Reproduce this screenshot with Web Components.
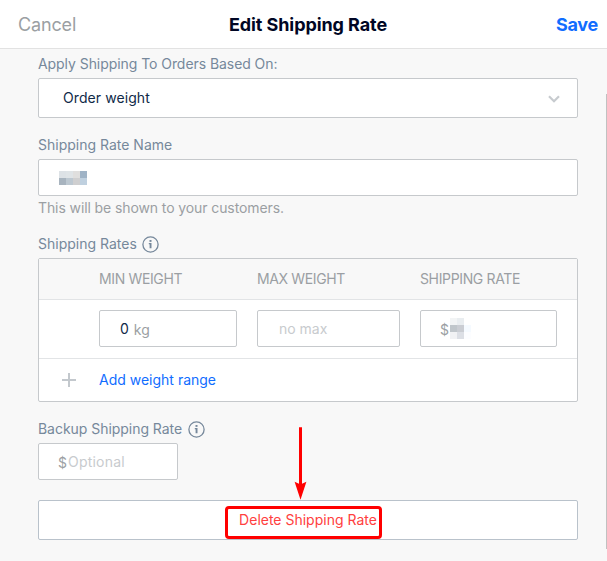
<!DOCTYPE html>
<html lang="en">
<head>
<meta charset="utf-8">
<title>Edit Shipping Rate</title>
<style>
    body {
        margin: 0;
        height: 561px;
        overflow: hidden;
        background: #f8f8f8;
        font-family: Inter, "Liberation Sans", sans-serif;
        font-size: 14px;
        line-height: 20px;
        color: #0f2a48;
    }
</style>
</head>
<body>
<rate-editor>
    <modal-header slot="header">
        <span slot="cancel">Cancel</span>
        Edit Shipping Rate
        <span slot="save">Save</span>
    </modal-header>

    <form-field label="Apply Shipping To Orders Based On:" style="--gap: 1px; --tracking: -0.06px">
        <select-box>Order weight</select-box>
    </form-field>

    <form-field label="Shipping Rate Name" style="--gap: 13px">
        <text-box style="--pad: 20px"><pixel-mask cols="4" colors="#dde2e6 #dfe4e7 #e0dfde #9fb3c6 #a8b4bf #bdc8d1 #cfcfd0 #bfd0df"></pixel-mask></text-box>
        <span slot="hint">This will be shown to your customers.</span>
    </form-field>

    <form-field label="Shipping Rates" info style="--gap: 11px">
        <rate-table></rate-table>
    </form-field>

    <form-field label="Backup Shipping Rate" info style="--gap: 13px; --tracking: -0.04px">
        <text-box prefix="$" placeholder="Optional" style="width: 140px; --pad: 19px; --tracking: 0.22px"></text-box>
    </form-field>

    <delete-button>Delete Shipping Rate</delete-button>
</rate-editor>

<script>
// --- Page shell ---
class RateEditor extends HTMLElement {
    constructor() {
        super();
        this.attachShadow({ mode: 'open' });
    }

    connectedCallback() {
        this.shadowRoot.innerHTML = `
            <style>
                :host {
                    display: block;
                    position: relative;
                    height: 561px;
                }
                main {
                    display: flex;
                    flex-direction: column;
                    padding: 0 29px 0 38px;
                }
                .scrollbar {
                    position: absolute;
                    right: 0;
                    top: 94px;
                    width: 1px;
                    height: 455px;
                    background: #c1c1c1;
                }
            </style>
            <slot name="header"></slot>
            <main><slot></slot></main>
            <div class="scrollbar"></div>
        `;
    }
}
customElements.define('rate-editor', RateEditor);


// --- Header bar ---
class ModalHeader extends HTMLElement {
    constructor() {
        super();
        this.attachShadow({ mode: 'open' });
    }

    connectedCallback() {
        this.shadowRoot.innerHTML = `
            <style>
                :host {
                    display: grid;
                    grid-template-columns: 1fr auto 1fr;
                    align-items: center;
                    box-sizing: border-box;
                    height: 49px;
                    padding: 1px 9px 0 18px;
                    border-bottom: 1px solid #e2e2e2;
                    background: #fff;
                    font-size: 18px;
                    line-height: 24px;
                }
                .cancel {
                    color: #9b9fa3;
                    letter-spacing: -0.15px;
                }
                .title {
                    font-weight: 700;
                    color: #000624;
                    letter-spacing: -0.08px;
                }
                .save {
                    justify-self: end;
                    font-weight: 700;
                    color: #116dff;
                    letter-spacing: -0.25px;
                }
            </style>
            <div class="cancel"><slot name="cancel"></slot></div>
            <div class="title"><slot></slot></div>
            <div class="save"><slot name="save"></slot></div>
        `;
    }
}
customElements.define('modal-header', ModalHeader);


// --- Label, control and hint ---
class FormField extends HTMLElement {
    constructor() {
        super();
        this.attachShadow({ mode: 'open' });
    }

    connectedCallback() {
        const label = this.getAttribute('label');
        const info = this.hasAttribute('info') ? '<info-icon></info-icon>' : '';

        this.shadowRoot.innerHTML = `
            <style>
                :host {
                    display: block;
                    margin-top: var(--gap, 13px);
                }
                .label {
                    display: flex;
                    align-items: center;
                    gap: 5.5px;
                    height: 28px;
                    color: #76889b;
                    letter-spacing: var(--tracking, 0);
                }
                slot[name="hint"] {
                    display: block;
                    line-height: 23px;
                    color: #9b9fa3;
                    letter-spacing: -0.1px;
                }
                .no-hint {
                    display: none !important;
                }
            </style>
            <div class="label"><span>${label}</span>${info}</div>
            <slot></slot>
            <slot name="hint" class="${this.querySelector('[slot=hint]') ? '' : 'no-hint'}"></slot>
        `;
    }
}
customElements.define('form-field', FormField);


class InfoIcon extends HTMLElement {
    constructor() {
        super();
        this.attachShadow({ mode: 'open' });
    }

    connectedCallback() {
        this.shadowRoot.innerHTML = `
            <style>
                :host {
                    display: block;
                    width: 17px;
                    height: 17px;
                    color: #76889b;
                }
                svg {
                    display: block;
                }
            </style>
            <svg width="17" height="17" viewBox="0 0 17 17" fill="currentColor">
                <circle cx="8.5" cy="8.5" r="7.6" fill="none" stroke="currentColor" stroke-width="1.3"/>
                <path d="M6.8 7h2.7v5.3H7.6V8.2h-.8z"/>
                <path d="M7.5 4h2v1.9h-2z"/>
            </svg>
        `;
    }
}
customElements.define('info-icon', InfoIcon);


// --- Inputs ---
class SelectBox extends HTMLElement {
    constructor() {
        super();
        this.attachShadow({ mode: 'open' });
    }

    connectedCallback() {
        this.shadowRoot.innerHTML = `
            <style>
                :host {
                    display: flex;
                    align-items: center;
                    justify-content: space-between;
                    box-sizing: border-box;
                    height: 40px;
                    padding: 0 17px 0 24px;
                    border: 1px solid #c6c9cc;
                    border-radius: 2px;
                    background: #fff;
                    letter-spacing: 0.08px;
                }
                svg {
                    margin-top: 1px;
                }
            </style>
            <slot></slot>
            <svg width="12" height="8" viewBox="0 0 12 8" fill="none" stroke="#c7cbcf" stroke-width="2.2">
                <path d="M1 1.2l5 5 5-5"/>
            </svg>
        `;
    }
}
customElements.define('select-box', SelectBox);


class TextBox extends HTMLElement {
    constructor() {
        super();
        this.attachShadow({ mode: 'open' });
    }

    connectedCallback() {
        const part = (name) => {
            const text = this.getAttribute(name);
            return text ? `<span class="${name}">${text}</span>` : '';
        };

        this.shadowRoot.innerHTML = `
            <style>
                :host {
                    display: flex;
                    align-items: center;
                    box-sizing: border-box;
                    height: 37px;
                    padding-left: var(--pad, 20px);
                    border: 1px solid #c6c9cc;
                    border-radius: 2px;
                    background: #fff;
                }
                .prefix, .unit {
                    padding-top: 2px;
                    color: #9b9fa3;
                }
                .unit {
                    margin-left: 5px;
                }
                .placeholder {
                    color: #c8cbce;
                    letter-spacing: var(--tracking, 0);
                }
                .prefix + .placeholder {
                    margin-left: 1px;
                }
            </style>
            ${part('prefix')}${part('value')}${part('unit')}${part('placeholder')}<slot></slot>
        `;
    }
}
customElements.define('text-box', TextBox);


// Grid of flat squares that hides a private value
class PixelMask extends HTMLElement {
    constructor() {
        super();
        this.attachShadow({ mode: 'open' });
    }

    connectedCallback() {
        const cols = this.getAttribute('cols');
        const cells = this.getAttribute('colors').split(' ')
            .map(color => `<i style="background: ${color}"></i>`)
            .join('');

        this.shadowRoot.innerHTML = `
            <style>
                :host {
                    display: grid;
                    grid-template-columns: repeat(${cols}, 7px);
                    grid-auto-rows: 7px;
                }
            </style>
            ${cells}
        `;
    }
}
customElements.define('pixel-mask', PixelMask);


// --- Rates table ---
class RateTable extends HTMLElement {
    constructor() {
        super();
        this.attachShadow({ mode: 'open' });
    }

    connectedCallback() {
        this.shadowRoot.innerHTML = `
            <style>
                :host {
                    display: block;
                    box-sizing: border-box;
                    border: 1px solid #c6c9cc;
                    border-radius: 2px;
                    background: #fff;
                }
                .row {
                    display: grid;
                    grid-template-columns: 40px 138px 143px 137px;
                    column-gap: 20px;
                    align-items: center;
                    box-sizing: border-box;
                }
                .head {
                    height: 41px;
                    border-bottom: 1px solid #e2e4e6;
                    background: #f8f8f8;
                    color: #9b9fa3;
                    letter-spacing: -0.36px;
                }
                .values {
                    height: 59px;
                    border-bottom: 1px solid #e2e4e6;
                }
                .values text-box {
                    margin-top: -1px;
                }
                .add {
                    height: 42px;
                    color: #116dff;
                }
                .add span {
                    grid-column: 2 / 4;
                }
                svg {
                    margin-left: 23px;
                }
            </style>
            <div class="row head">
                <i></i><span>MIN WEIGHT</span><span>MAX WEIGHT</span><span>SHIPPING RATE</span>
            </div>
            <div class="row values">
                <i></i>
                <text-box value="0" unit="kg"></text-box>
                <text-box placeholder="no max" style="--pad: 21px"></text-box>
                <text-box prefix="$" style="--pad: 19px"><pixel-mask cols="3" style="margin-left: 1px" colors="#f2f4f5 #e9edf0 #fff #c0c6cb #cacdd3 #f5faff #f1f2f4 #dcdfe5 #fcfdff"></pixel-mask></text-box>
            </div>
            <div class="row add">
                <svg width="14" height="14" viewBox="0 0 14 14" fill="none" stroke="#c3c8cd" stroke-width="2">
                    <path d="M0 7h14M7 0v14"/>
                </svg>
                <span>Add weight range</span>
            </div>
        `;
    }
}
customElements.define('rate-table', RateTable);


// --- Delete button with its callout ---
class DeleteButton extends HTMLElement {
    constructor() {
        super();
        this.attachShadow({ mode: 'open' });
    }

    connectedCallback() {
        this.shadowRoot.innerHTML = `
            <style>
                :host {
                    display: flex;
                    align-items: center;
                    justify-content: center;
                    position: relative;
                    box-sizing: border-box;
                    height: 40px;
                    margin-top: 20px;
                    border: 1px solid #b9c2cb;
                    border-radius: 2px;
                    background: #fff;
                    color: #ff4040;
                }
                .frame {
                    position: absolute;
                    left: 186px;
                    top: 5px;
                    box-sizing: border-box;
                    width: 157px;
                    height: 33px;
                    border: 3px solid #f00;
                    border-radius: 4px;
                }
                .arrow {
                    position: absolute;
                    left: 255px;
                    top: -74px;
                }
            </style>
            <slot></slot>
            <div class="frame"></div>
            <svg class="arrow" width="14" height="73" viewBox="0 0 14 73" fill="#f00">
                <path d="M5 .3h3v56.5l4.4-2L6.5 72.8.6 54.8l4.4 2z"/>
            </svg>
        `;
    }
}
customElements.define('delete-button', DeleteButton);
</script>
</body>
</html>
